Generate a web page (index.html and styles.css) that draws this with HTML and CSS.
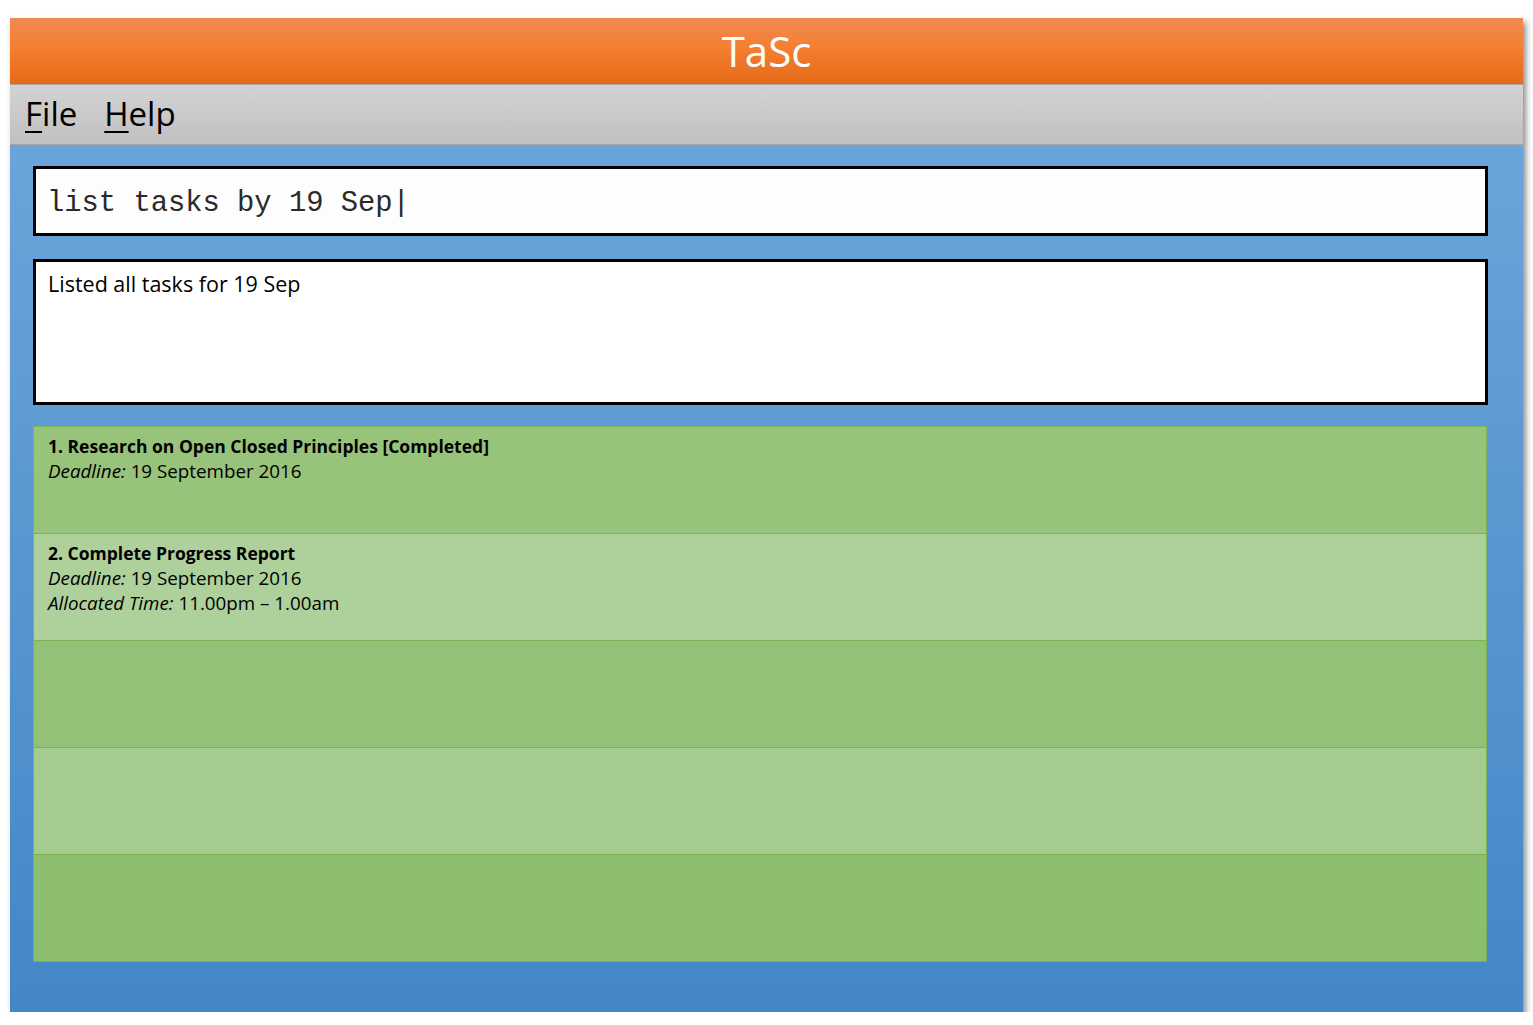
FILE: index.html
```html
<!DOCTYPE html>
<html>
<head>
<meta charset="utf-8">
<link rel="stylesheet" href="styles.css">
<title>TaSc</title>
</head>
<body>
<div class="page">
  <div class="window">
    <div class="titlebar">TaSc</div>
    <div class="menubar">
      <span class="menu"><u>F</u>ile</span>
      <span class="menu"><u>H</u>elp</span>
    </div>
    <div class="content">
      <div class="command">list tasks by 19 Sep|</div>
      <div class="result">Listed all tasks for 19 Sep</div>
      <div class="list">
        <div class="row r1">
          <div class="task-title">1. Research on Open Closed Principles [Completed]</div>
          <div class="line"><i>Deadline:</i> 19 September 2016</div>
        </div>
        <div class="row r2">
          <div class="task-title">2. Complete Progress Report</div>
          <div class="line"><i>Deadline:</i> 19 September 2016</div>
          <div class="line"><i>Allocated Time:</i> 11.00pm – 1.00am</div>
        </div>
        <div class="row r3"></div>
        <div class="row r4"></div>
        <div class="row r5"></div>
      </div>
    </div>
  </div>
</div>
</body>
</html>
```

FILE: styles.css
```css
html, body {
  margin: 0;
  padding: 0;
  background: #ffffff;
}
.page {
  padding: 18px 10px 0 10px;
}
.window {
  width: 1513px;
  height: 994px;
  display: flex;
  flex-direction: column;
  box-shadow: 3px 4px 6px rgba(0, 0, 0, 0.45);
  font-family: "Open Sans", "Lato", sans-serif;
}
.titlebar {
  height: 66px;
  flex: none;
  background: linear-gradient(to bottom, #f08a54 0%, #f47f30 45%, #e56a18 100%);
  color: #ffffff;
  font-size: 42px;
  text-align: center;
  line-height: 66px;
}
.menubar {
  height: 61px;
  flex: none;
  box-sizing: border-box;
  border-top: 1px solid #a6a6a6;
  border-bottom: 1px solid #a6a6a6;
  background: linear-gradient(to bottom, #d3d3d3, #c0c0c0);
  display: flex;
  align-items: center;
  gap: 27px;
  padding-left: 15px;
  padding-bottom: 2px;
}
.menu {
  font-size: 33px;
  color: #000;
}
.menu u {
  text-decoration-thickness: 2px;
  text-underline-offset: 5px;
}
.content {
  flex: 1;
  background: linear-gradient(to bottom, #6ba4da, #4387c7);
  padding: 21px 35px 0 23px;
  display: flex;
  flex-direction: column;
}
.command {
  height: 70px;
  box-sizing: border-box;
  border: 3px solid #000;
  background: #fdfdfd;
  font-family: "Liberation Mono", monospace;
  font-size: 28.8px;
  line-height: 70px;
  padding-left: 11px;
  color: #2a2a2a;
}
.result {
  margin-top: 23px;
  height: 146px;
  box-sizing: border-box;
  border: 3px solid #000;
  background: #fff;
  font-size: 21.5px;
  padding: 7px 0 0 12px;
  color: #000;
}
.list {
  margin-top: 21px;
  margin-right: 1px;
  display: flex;
  flex-direction: column;
  border: 1px solid #78b356;
}
.row {
  height: 107px;
  box-sizing: border-box;
  border-top: 1px solid #78b356;
  padding: 7px 0 0 14px;
  font-size: 18.8px;
  line-height: 25px;
  color: #000;
}
.row:first-child {
  border-top: none;
  height: 106px;
}
.r1 { background: #98c37b; }
.r2 { background: #aed09b; }
.r3 { background: #93c177; }
.r4 { background: #a4cc8f; }
.r5 { background: #8dbe70; }
.task-title {
  font-weight: bold;
  font-size: 17.5px;
}
```
